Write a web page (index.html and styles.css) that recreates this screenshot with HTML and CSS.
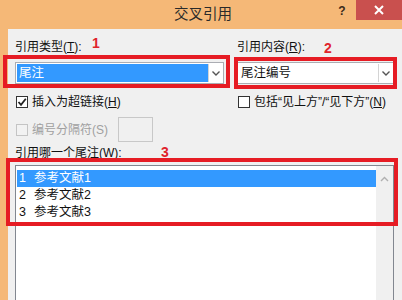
FILE: index.html
```html
<!DOCTYPE html>
<html lang="zh-CN">
<head>
    <meta charset="UTF-8">
    <meta name="viewport" content="width=device-width, initial-scale=1.0">
    <title>交叉引用</title>
    <link rel="stylesheet" href="styles.css">
</head>
<body>
    <div class="window">
        <!-- Title bar -->
        <div class="titlebar">
            <span></span>
            <h1 class="title">交叉引用</h1>
            <div class="controls">
                <span class="help">?</span>
                <span class="close">
                    <svg width="10" height="10" viewBox="0 0 10 10"><path d="M1 1L9 9M9 1L1 9" stroke="#fff" stroke-width="2"/></svg>
                </span>
            </div>
        </div>

        <div class="dialog">
            <div class="cols">
                <div class="field">
                    <label class="label">引用类型(<u>T</u>):</label>
                    <div class="combo">
                        <span class="value selected">尾注</span>
                        <span class="arrow">
                            <svg width="8" height="5" viewBox="0 0 8 5"><path d="M0.5 0.5L4 4L7.5 0.5" fill="none" stroke="#555" stroke-width="1.4"/></svg>
                        </span>
                    </div>
                </div>
                <div class="field">
                    <label class="label">引用内容(<u>R</u>):</label>
                    <div class="combo">
                        <span class="value">尾注编号</span>
                        <span class="arrow">
                            <svg width="8" height="5" viewBox="0 0 8 5"><path d="M0.5 0.5L4 4L7.5 0.5" fill="none" stroke="#555" stroke-width="1.4"/></svg>
                        </span>
                    </div>
                </div>
            </div>

            <div class="cols checks">
                <label class="check">
                    <span class="box">
                        <svg width="10" height="10" viewBox="0 0 10 10"><path d="M1.5 5L4 7.8L8.8 1.8" fill="none" stroke="#222" stroke-width="1.8"/></svg>
                    </span>
                    <span class="text">插入为超链接(<u>H</u>)</span>
                </label>
                <label class="check">
                    <span class="box"></span>
                    <span class="text">包括“见上方”/“见下方”(<u>N</u>)</span>
                </label>
            </div>

            <div class="separator-row">
                <label class="check disabled">
                    <span class="box"></span>
                    <span class="text">编号分隔符(S)</span>
                </label>
                <div class="textbox"></div>
            </div>

            <label class="label list-label">引用哪一个尾注(<u>W</u>):</label>

            <div class="listbox">
                <ul class="items">
                    <li class="item active"><span class="num">1</span>参考文献1</li>
                    <li class="item"><span class="num">2</span>参考文献2</li>
                    <li class="item"><span class="num">3</span>参考文献3</li>
                </ul>
                <div class="scrollbar">
                    <svg width="9" height="6" viewBox="0 0 9 6"><path d="M1 5L4.5 1.5L8 5" fill="none" stroke="#b0b0b0" stroke-width="1.4"/></svg>
                </div>
            </div>
        </div>

        <!-- Red annotation marks drawn over the dialog -->
        <div class="mark mark-1"></div>
        <div class="mark mark-2"></div>
        <div class="mark mark-3"></div>
        <span class="mark-num num-1">1</span>
        <span class="mark-num num-2">2</span>
        <span class="mark-num num-3">3</span>
    </div>
</body>
</html>
```

FILE: styles.css
```css
* {
    box-sizing: border-box;
    margin: 0;
    padding: 0;
}

body {
    width: 402px;
    height: 300px;
    overflow: hidden;
    background-color: #f0f0f0;
    font-family: "Liberation Sans", "Noto Sans CJK SC", sans-serif;
    font-size: 12px;
    color: #111;
}

.window {
    position: relative;
    height: 300px;
}

/* Title bar */
.titlebar {
    height: 29px;
    background-color: #f5b877;
    display: grid;
    grid-template-columns: 1fr auto 1fr;
}

.title {
    font-size: 14.5px;
    font-weight: normal;
    color: #2a2a2a;
    line-height: 29px;
    padding-left: 4px;
}

.controls {
    display: flex;
    justify-content: flex-end;
    align-items: flex-start;
}

.help {
    font-size: 12px;
    font-weight: bold;
    color: #3a2a1a;
    width: 28px;
    line-height: 20px;
    text-align: center;
    margin-top: 1px;
}

.close {
    width: 46px;
    height: 20px;
    background-color: #c9504e;
    display: flex;
    align-items: center;
    justify-content: center;
}

/* Dialog body */
.dialog {
    height: 271px;
    border-left: 8px solid #f5b877;
    padding: 10px 8px 0 7px;
}

.cols {
    display: grid;
    grid-template-columns: 209px 157px;
    column-gap: 13px;
}

.label {
    display: block;
    line-height: 16px;
    height: 16px;
    white-space: nowrap;
}

.combo {
    margin-top: 7px;
    height: 22px;
    border: 1px solid #abadb3;
    background-color: #fff;
    display: flex;
    padding: 1px 0 1px 1px;
}

.value {
    flex: 1;
    line-height: 18px;
    padding-left: 2px;
    font-size: 12.5px;
}

.value.selected {
    background-color: #3399ff;
    color: #fff;
}

.arrow {
    width: 15px;
    border-left: 1px solid #d4d4d4;
    display: flex;
    align-items: center;
    justify-content: center;
}

.checks {
    margin-top: 10px;
}

.check {
    display: flex;
    align-items: center;
    gap: 4px;
    line-height: 16px;
    white-space: nowrap;
    padding-left: 1px;
}

.box {
    width: 12px;
    height: 12px;
    border: 1px solid #333;
    background-color: #fff;
    display: flex;
    align-items: center;
    justify-content: center;
}

.check.disabled {
    color: #a0a0a0;
}

.check.disabled .box {
    border-color: #c4c4c4;
    background-color: #f2f2f2;
}

.separator-row {
    margin-top: 7px;
    display: flex;
    align-items: center;
    gap: 10px;
}

.textbox {
    width: 35px;
    height: 25px;
    border: 1px solid #c8c8c8;
    background-color: #f0f0f0;
}

.list-label {
    margin-top: 3px;
}

.listbox {
    margin-top: 4px;
    height: 140px;
    width: 379px;
    border: 1px solid #828790;
    background-color: #fff;
    display: flex;
}

.items {
    flex: 1;
    list-style: none;
    padding: 4px 0 0 1px;
}

.item {
    height: 17px;
    line-height: 17px;
    padding-left: 2px;
    display: flex;
    font-size: 12.5px;
}

.item.active {
    background-color: #3399ff;
    color: #fff;
}

.num {
    width: 15px;
}

.scrollbar {
    width: 17px;
    background-color: #f0f0f0;
    display: flex;
    justify-content: center;
    padding-top: 10px;
}

/* Annotations */
.mark {
    position: absolute;
    border: 4px solid #e61c24;
}

.mark-1 {
    left: 3px;
    top: 55px;
    width: 227px;
    height: 33px;
}

.mark-2 {
    left: 234px;
    top: 57px;
    width: 163px;
    height: 32px;
}

.mark-3 {
    left: 6px;
    top: 158px;
    width: 392px;
    height: 68px;
}

.mark-num {
    position: absolute;
    font-family: "Liberation Sans", sans-serif;
    font-weight: bold;
    font-size: 14px;
    line-height: 14px;
    color: #e0242b;
}

.num-1 {
    left: 92px;
    top: 36px;
}

.num-2 {
    left: 324px;
    top: 41px;
}

.num-3 {
    left: 161px;
    top: 145px;
}
```
